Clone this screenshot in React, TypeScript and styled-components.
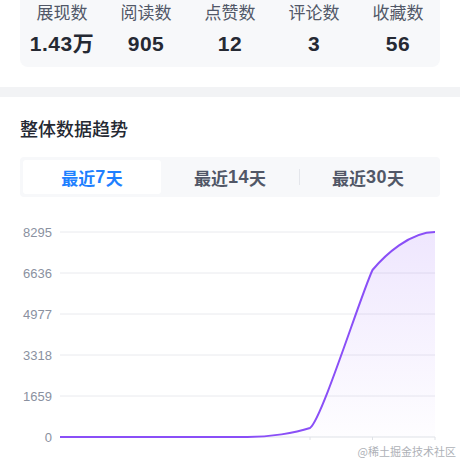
import React from 'react';
import styled, { createGlobalStyle } from 'styled-components';

const GlobalStyle = createGlobalStyle`
  html, body {
    margin: 0;
    padding: 0;
    background: #ffffff;
  }
  body {
    font-family: "Liberation Sans", "Noto Sans CJK SC", sans-serif;
    overflow: hidden;
  }
`;

const Page = styled.div`
  position: relative;
  width: 460px;
  height: 460px;
  overflow: hidden;
  background: #ffffff;
`;

const TopSection = styled.div`
  padding: 0 20px 20px;
  background: #ffffff;
`;

const StatsCard = styled.div`
  display: grid;
  grid-template-columns: repeat(5, 1fr);
  background: #f7f8fa;
  border-radius: 0 0 8px 8px;
  padding: 2px 0 9px;
`;

const StatItem = styled.div`
  display: flex;
  flex-direction: column;
  align-items: center;
  gap: 8px;
`;

const StatLabel = styled.div`
  font-size: 17px;
  line-height: 20px;
  color: #515767;
  font-family: "Noto Sans CJK SC", sans-serif;
`;

const StatValue = styled.div`
  font-size: 21px;
  line-height: 28px;
  font-weight: 700;
  color: #252933;
  font-family: "Liberation Sans", "Noto Sans CJK SC", sans-serif;
  letter-spacing: 0.5px;
`;

const Band = styled.div`
  height: 10px;
  background: #f2f3f5;
`;

const TrendSection = styled.div`
  padding: 18px 20px 0;
`;

const Title = styled.h2`
  margin: 0;
  font-size: 18px;
  line-height: 26px;
  font-weight: 500;
  color: #252933;
  font-family: "Noto Sans CJK SC", sans-serif;
`;

const Tabs = styled.div`
  display: grid;
  grid-template-columns: repeat(3, 1fr);
  margin-top: 16px;
  height: 40px;
  padding: 3px;
  box-sizing: border-box;
  background: #f7f8fa;
  border-radius: 4px;
`;

const Tab = styled.div<{ $active?: boolean; $divider?: boolean }>`
  position: relative;
  display: flex;
  align-items: center;
  justify-content: center;
  border-radius: 3px;
  background: ${(p) => (p.$active ? '#ffffff' : 'transparent')};
  color: ${(p) => (p.$active ? '#1e80ff' : '#515767')};
  font-size: 17px;
  font-weight: 600;
  font-family: "Noto Sans CJK SC", sans-serif;

  b {
    font-family: "Liberation Sans", sans-serif;
    font-weight: 700;
    font-size: 18px;
    letter-spacing: 0.5px;
  }

  &::before {
    content: '';
    display: ${(p) => (p.$divider ? 'block' : 'none')};
    position: absolute;
    left: 0;
    top: 9px;
    bottom: 9px;
    width: 1px;
    background: #e4e6eb;
  }
`;

const ChartSvg = styled.svg`
  display: block;
  margin: 0 -20px;
`;

const AxisLabel = styled.text`
  font-size: 13px;
  fill: #8a919f;
  font-family: "Liberation Sans", sans-serif;
`;

const Watermark = styled.div`
  position: absolute;
  right: 4px;
  bottom: 2px;
  font-size: 11px;
  line-height: 14px;
  color: #aeb1b7;
  font-family: "Noto Sans CJK SC", sans-serif;
`;

const stats = [
  { label: '展现数', value: '1.43万' },
  { label: '阅读数', value: '905' },
  { label: '点赞数', value: '12' },
  { label: '评论数', value: '3' },
  { label: '收藏数', value: '56' },
];

const yTicks = ['8295', '6636', '4977', '3318', '1659', '0'];

const linePath =
  'M60,240 L247.5,240 C270,240 295,236 310,231 C322,222 360,100 372.5,73 C385,58 410,35 435,35';
const areaPath = linePath + ' L435,240 L60,240 Z';

const Chart = () => (
  <ChartSvg width={460} height={263} viewBox="0 0 460 263">
    <defs>
      <linearGradient id="areaFill" x1="0" y1="0" x2="0" y2="1">
        <stop offset="0" stopColor="#8a4ff7" stopOpacity={0.14} />
        <stop offset="1" stopColor="#8a4ff7" stopOpacity={0.01} />
      </linearGradient>
    </defs>
    {yTicks.map((t, i) => {
      const y = 35 + i * 41;
      return (
        <g key={t}>
          <line x1={60} x2={435} y1={y} y2={y} stroke={i === 5 ? '#dfe2e7' : '#e9eaee'} strokeWidth={1} />
          <AxisLabel x={52} y={y + 4.5} textAnchor="end">
            {t}
          </AxisLabel>
        </g>
      );
    })}
    {[310, 372.5, 435].map((x) => (
      <line key={x} x1={x} x2={x} y1={240} y2={243} stroke="#dfe2e7" strokeWidth={1} />
    ))}
    <path d={areaPath} fill="url(#areaFill)" />
    <path d={linePath} fill="none" stroke="#8a4ff7" strokeWidth={2} strokeLinejoin="round" />
  </ChartSvg>
);

const App = () => (
  <Page>
    <GlobalStyle />
    <TopSection>
      <StatsCard>
        {stats.map((s) => (
          <StatItem key={s.label}>
            <StatLabel>{s.label}</StatLabel>
            <StatValue>{s.value}</StatValue>
          </StatItem>
        ))}
      </StatsCard>
    </TopSection>
    <Band />
    <TrendSection>
      <Title>整体数据趋势</Title>
      <Tabs>
        <Tab $active>
          最近<b>7</b>天
        </Tab>
        <Tab>
          最近<b>14</b>天
        </Tab>
        <Tab $divider>
          最近<b>30</b>天
        </Tab>
      </Tabs>
      <Chart />
    </TrendSection>
    <Watermark>@稀土掘金技术社区</Watermark>
  </Page>
);

export default App;
